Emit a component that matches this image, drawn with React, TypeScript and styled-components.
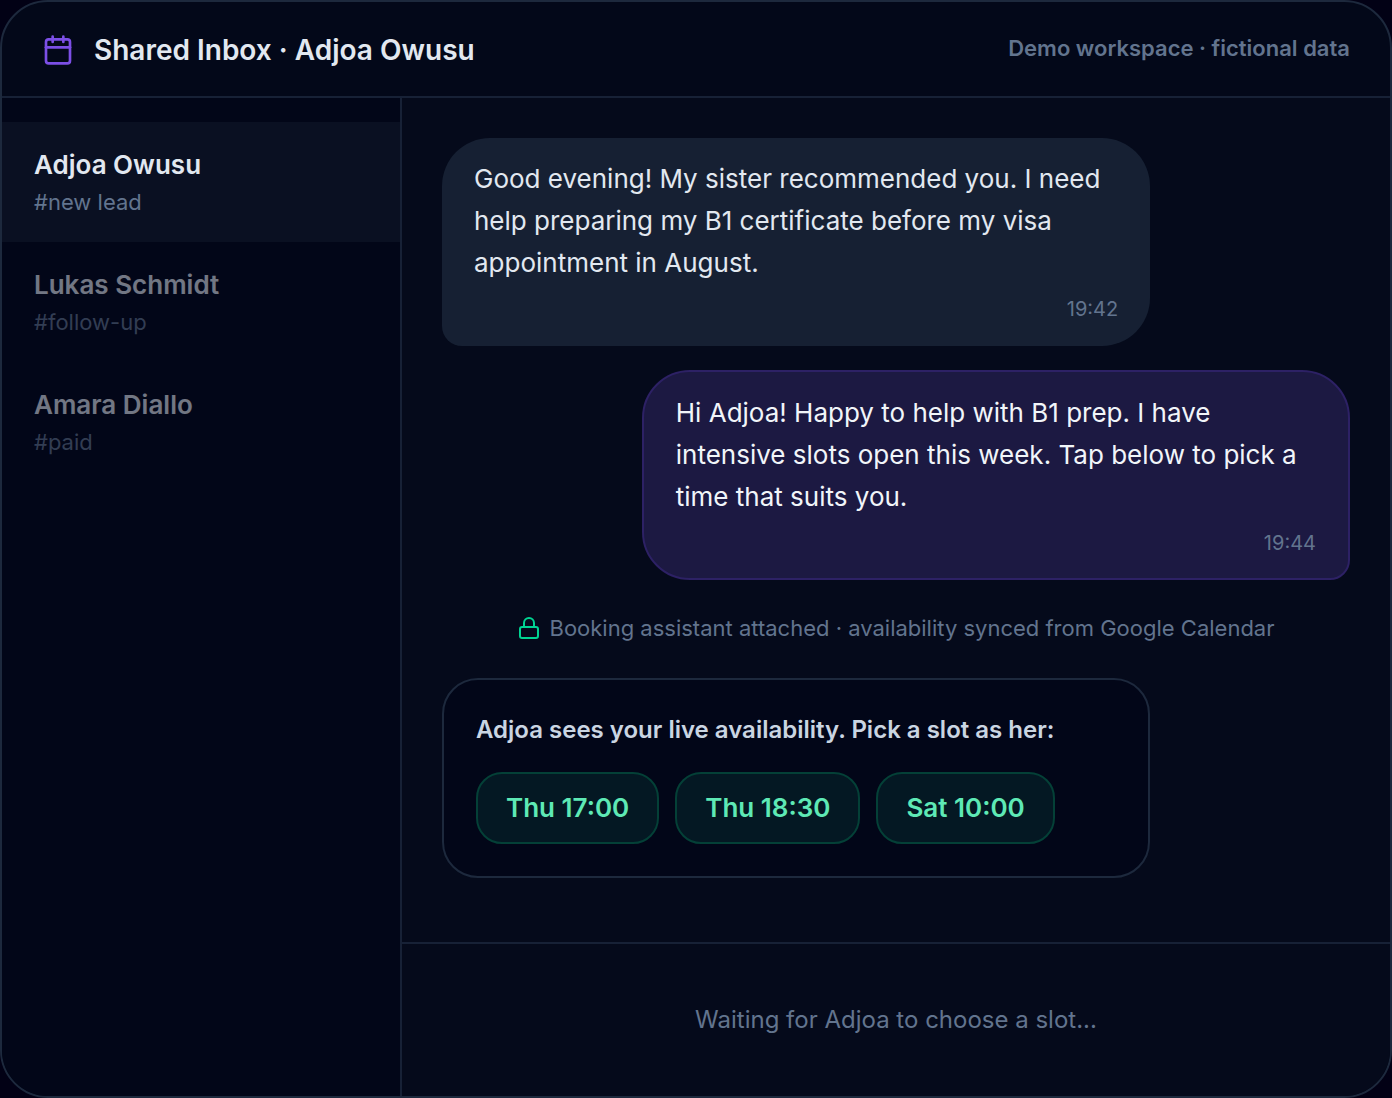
import React from "react";
import styled, { createGlobalStyle } from "styled-components";
import { Calendar, Lock } from "lucide-react";

const color = {
  page: "#020115",
  panel: "#030819",
  rail: "#020618",
  thread: "#050a1b",
  border: "#1d293d",
  divider: "#172136",
  text: "#e2e8f0",
  muted: "#62748e",
};

const GlobalStyle = createGlobalStyle`
  *, *::before, *::after { box-sizing: border-box; }
  body {
    margin: 0;
    background: ${color.page};
    color: ${color.text};
    font-family: Inter, "Liberation Sans", sans-serif;
    font-optical-sizing: none;
    -webkit-font-smoothing: antialiased;
  }
  button { font: inherit; font-optical-sizing: none; }
`;

const Window = styled.div`
  display: flex;
  flex-direction: column;
  min-height: 100vh;
  border: 2px solid ${color.border};
  border-radius: 48px;
  background: ${color.panel};
  overflow: hidden;
`;

const Header = styled.header`
  display: flex;
  align-items: flex-start;
  justify-content: space-between;
  gap: 20px;
  padding: 26px 40px 24px;
  border-bottom: 2px solid ${color.divider};
`;

const Title = styled.h1`
  display: flex;
  align-items: center;
  gap: 20px;
  margin: 0;
  font-size: 28px;
  font-weight: 600;
  line-height: 44px;

  svg { color: #7c4fe6; }
`;

const Note = styled.span`
  font-size: 22px;
  font-weight: 600;
  line-height: 40px;
  color: ${color.muted};
`;

const Body = styled.div`
  display: grid;
  grid-template-columns: 400px 1fr;
  flex: 1;
`;

const Rail = styled.nav`
  padding: 24px 0;
  border-right: 2px solid ${color.divider};
  background: ${color.rail};
`;

const Contact = styled.button<{ $active?: boolean }>`
  display: block;
  width: 100%;
  padding: 24px 32px 22px;
  border: 0;
  text-align: left;
  cursor: pointer;
  color: ${color.text};
  background: ${(p) => (p.$active ? "#0a1022" : "transparent")};
  opacity: ${(p) => (p.$active ? 1 : 0.5)};
`;

const Name = styled.span`
  display: block;
  font-size: 26px;
  font-weight: 600;
  line-height: 38px;
`;

const Tag = styled.span`
  display: block;
  font-size: 22px;
  line-height: 36px;
  color: ${color.muted};
`;

const Conversation = styled.main`
  display: flex;
  flex-direction: column;
  background: ${color.thread};
`;

const Thread = styled.section`
  display: flex;
  flex: 1;
  flex-direction: column;
  gap: 24px;
  padding: 40px;
`;

const Bubble = styled.article<{ $mine?: boolean }>`
  align-self: ${(p) => (p.$mine ? "flex-end" : "flex-start")};
  width: 78%;
  padding: ${(p) => (p.$mine ? "20px 32px 18px" : "20px 32px")};
  border: ${(p) => (p.$mine ? "2px solid #2d2165" : "0")};
  border-radius: ${(p) => (p.$mine ? "48px 48px 20px 48px" : "48px 48px 48px 20px")};
  background: ${(p) => (p.$mine ? "#1c1942" : "#162033")};
  color: ${(p) => (p.$mine ? "#f1f5f9" : color.text)};
`;

const Message = styled.p`
  margin: 0 0 8px;
  font-size: 26px;
  line-height: 42px;
`;

const Time = styled.time`
  display: block;
  font-size: 20px;
  line-height: 34px;
  text-align: right;
  color: ${color.muted};
`;

const Status = styled.p`
  display: flex;
  align-items: center;
  justify-content: center;
  gap: 8px;
  margin: 0;
  padding: 8px 0 10px;
  font-size: 22px;
  line-height: 32px;
  color: ${color.muted};

  svg { color: #00d492; }
`;

const SlotCard = styled.section`
  width: 78%;
  padding: 32px;
  border: 2px solid ${color.border};
  border-radius: 36px;
  background: ${color.rail};
`;

const SlotTitle = styled.h2`
  margin: 0 0 24px;
  font-size: 24px;
  font-weight: 600;
  line-height: 36px;
  color: #cad5e2;
`;

const Slots = styled.div`
  display: flex;
  flex-wrap: wrap;
  gap: 16px;
`;

const Slot = styled.button`
  padding: 14px 28px;
  border: 2px solid #044037;
  border-radius: 26px;
  background: #041823;
  color: #5ee9b5;
  font-size: 26px;
  font-weight: 600;
  line-height: 40px;
  cursor: pointer;
`;

const Footer = styled.footer`
  padding: 58px 40px;
  border-top: 2px solid ${color.divider};
  font-size: 24px;
  line-height: 36px;
  text-align: center;
  color: ${color.muted};
`;

const contacts = [
  { name: "Adjoa Owusu", tag: "#new lead" },
  { name: "Lukas Schmidt", tag: "#follow-up" },
  { name: "Amara Diallo", tag: "#paid" },
];

const slots = ["Thu 17:00", "Thu 18:30", "Sat 10:00"];

export default function App() {
  return (
    <>
      <GlobalStyle />
      <Window>
        <Header>
          <Title>
            <Calendar size={32} strokeWidth={2} aria-hidden />
            Shared Inbox · Adjoa Owusu
          </Title>
          <Note>Demo workspace · fictional data</Note>
        </Header>
        <Body>
          <Rail>
            {contacts.map((c, i) => (
              <Contact key={c.name} type="button" $active={i === 0}>
                <Name>{c.name}</Name>
                <Tag>{c.tag}</Tag>
              </Contact>
            ))}
          </Rail>
          <Conversation>
            <Thread>
              <Bubble>
                <Message>
                  Good evening! My sister recommended you. I need help preparing my B1
                  certificate before my visa appointment in August.
                </Message>
                <Time>19:42</Time>
              </Bubble>
              <Bubble $mine>
                <Message>
                  Hi Adjoa! Happy to help with B1 prep. I have intensive slots open this
                  week. Tap below to pick a time that suits you.
                </Message>
                <Time>19:44</Time>
              </Bubble>
              <Status>
                <Lock size={24} strokeWidth={2} aria-hidden />
                Booking assistant attached · availability synced from Google Calendar
              </Status>
              <SlotCard>
                <SlotTitle>Adjoa sees your live availability. Pick a slot as her:</SlotTitle>
                <Slots>
                  {slots.map((s) => (
                    <Slot key={s} type="button">{s}</Slot>
                  ))}
                </Slots>
              </SlotCard>
            </Thread>
            <Footer>Waiting for Adjoa to choose a slot...</Footer>
          </Conversation>
        </Body>
      </Window>
    </>
  );
}
